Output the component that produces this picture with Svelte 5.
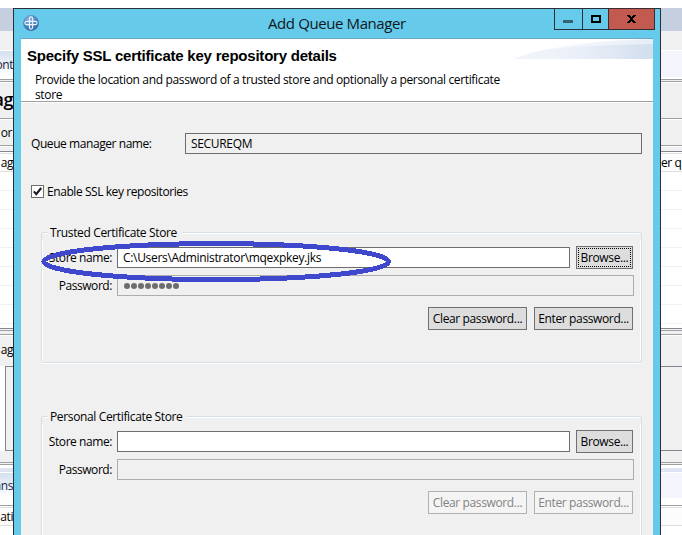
<script>
  // Horizontal strips of the application behind the dialog
  const bands = [
    { h: 8, c: '#ffffff' },
    { h: 23, c: '#c5cfdf' },
    { h: 19, c: '#f0f0f0' },
    { h: 1, c: '#ffffff' },
    { h: 26, c: '#f4f5fc', left: 'ont', kind: 'tab' },
    { h: 2, c: '#ffffff' },
    { h: 1, c: '#a0a0a0' },
    { h: 1, c: '#f0f0f0' },
    { h: 1, c: '#a0a0a0' },
    { h: 1, c: '#ffffff' },
    { h: 35, c: '#f0f0f0', left: 'ag', kind: 'title' },
    { h: 1, c: '#a0a0a0' },
    { h: 1, c: '#ffffff' },
    { h: 25, c: '#f0f0f0', left: 'or', kind: 'inset' },
    { h: 1, c: '#a0a0a0' },
    { h: 1, c: '#ffffff' },
    { h: 4, c: '#f0f0f0' },
    { h: 1, c: '#828790' },
    { h: 1, c: '#ffffff' },
    { h: 1, c: '#dedede' },
    { h: 17, c: '#fcfcfc', left: 'ag', right: 'er q' },
    { h: 1, c: '#dedede' },
    { h: 156, c: '#ffffff', kind: 'grid' },
    { h: 1, c: '#828790' },
    { h: 1, c: '#f0f0f0' },
    { h: 1, c: '#a0a0a0' },
    { h: 3, c: '#f0f0f0' },
    { h: 1, c: '#a0a0a0' },
    { h: 1, c: '#ffffff' },
    { h: 30, c: '#f0f0f0', left: 'ag', kind: 'raised' },
    { h: 85, c: '#f0f0f0', kind: 'box' },
    { h: 11, c: '#f0f0f0' },
    { h: 1, c: '#a0a0a0' },
    { h: 1, c: '#f0f0f0' },
    { h: 1, c: '#a0a0a0' },
    { h: 3, c: '#ffffff' },
    { h: 4, c: '#dfe4f5' },
    { h: 1, c: '#ffffff' },
    { h: 25, c: '#f4f5fc', left: 'ans', kind: 'tab' },
    { h: 7, c: '#ffffff' },
    { h: 1, c: '#a0a0a0' },
    { h: 1, c: '#ffffff' },
    { h: 1, c: '#dedede' },
    { h: 17, c: '#fcfcfc', left: 'ati' },
    { h: 1, c: '#dedede' },
    { h: 9, c: '#ffffff' }
  ];

  const groups = [
    { title: 'Trusted Certificate Store', store: 'C:\\Users\\Administrator\\mqexpkey.jks', password: 8, focused: true, disabled: false },
    { title: 'Personal Certificate Store', store: '', password: 0, focused: false, disabled: true }
  ];
</script>

<main>
  <div class="backdrop">
    {#each bands as b}
      <div class="band {b.kind ?? ''}" style="height:{b.h}px;background-color:{b.c}">
        <span class="edge">{b.left ?? ''}</span>
        {#if b.right}<span class="edge-right">{b.right}</span>{/if}
      </div>
    {/each}
  </div>

  <section class="dialog">
    <header class="titlebar">
      <svg class="logo" width="16" height="16" viewBox="0 0 16 16">
        <defs>
          <radialGradient id="ball" cx=".4" cy=".3" r=".75">
            <stop offset="0" stop-color="#8fb6dd" />
            <stop offset=".6" stop-color="#4b83bf" />
            <stop offset="1" stop-color="#2c619f" />
          </radialGradient>
        </defs>
        <circle cx="8" cy="8" r="7.9" fill="url(#ball)" />
        <g fill="none" stroke="#eaf3fb" stroke-width="1.1">
          <rect x="6.4" y="1.9" width="3.2" height="12.2" rx="1.6" />
          <rect x="1.9" y="6.4" width="12.2" height="3.2" rx="1.6" />
        </g>
      </svg>
      <h1>Add Queue Manager</h1>
      <div class="controls">
        <svg width="101" height="22" viewBox="0 0 101 22" shape-rendering="crispEdges">
          <rect x=".5" y=".5" width="28" height="21" fill="#66caea" stroke="#2b3038" />
          <rect x="28.5" y=".5" width="26" height="21" fill="#66caea" stroke="#2b3038" />
          <rect x="54.5" y=".5" width="46" height="21" fill="#c35a50" stroke="#3a2c30" />
          <rect x="9" y="12" width="10" height="3" fill="#33646f" />
          <rect x="38" y="8" width="8" height="6" fill="none" stroke="#000" stroke-width="2" />
          <path d="M73 7h3v1h1v1h1v-1h1v-1h3v1h-1v1h-1v1h-1v2h1v1h1v1h1v1h-3v-1h-1v-1h-1v1h-1v1h-3v-1h1v-1h1v-1h1v-2h-1v-1h-1v-1h-1z" fill="#000" />
        </svg>
      </div>
    </header>

    <div class="client">
      <div class="banner">
        <svg class="swoosh" width="140" height="20" viewBox="0 0 140 20">
          <defs>
            <linearGradient id="sweep">
              <stop offset="0" stop-color="#f2f4f8" />
              <stop offset=".3" stop-color="#eef2fa" />
              <stop offset=".65" stop-color="#e4eaf5" />
              <stop offset="1" stop-color="#d0deee" />
            </linearGradient>
          </defs>
          <path d="M0 20C30 8 80 2 140 0V20z" fill="url(#sweep)" />
          <path d="M30 11C70 3 110 1 140 0V5C100 6 60 7 30 11z" fill="#fff" opacity=".45" />
        </svg>
        <h2>Specify SSL certificate key repository details</h2>
        <p>Provide the location and password of a trusted store and optionally a personal certificate<br />store</p>
      </div>

      <div class="form">
        <div class="queue">
          <span class="queue-label">Queue manager name:</span>
          <div class="field readonly">SECUREQM</div>
        </div>

        <div class="enable">
          <svg width="13" height="13" viewBox="0 0 13 13">
            <rect x=".5" y=".5" width="12" height="12" fill="#fff" stroke="#6d6d6d" />
            <path d="M2.8 6.4L5.3 9.2L10.2 3" fill="none" stroke="#1c1c1c" stroke-width="2.1" />
          </svg>
          <span>Enable SSL key repositories</span>
        </div>

        {#each groups as g}
          <div class="group">
            <div class="legend"><span class="corner"></span><span class="legend-text">{g.title}</span><span class="rule"></span></div>
            <div class="group-body">
              <div class="line">
                <span class="label">Store name:</span>
                <div class="field store">{g.store}</div>
                <div class="button browse" class:focused={g.focused}><span>Browse...</span></div>
              </div>
              <div class="line second">
                <span class="label">Password:</span>
                <div class="field off">
                  {#each Array(g.password) as _}<i></i>{/each}
                </div>
              </div>
              <div class="actions">
                <div class="button" class:disabled={g.disabled}><span>Clear password...</span></div>
                <div class="button" class:disabled={g.disabled}><span>Enter password...</span></div>
              </div>
            </div>
          </div>
        {/each}
      </div>
    </div>
  </section>

  <svg class="marker" width="354" height="44" viewBox="0 0 354 44" shape-rendering="crispEdges">
    <ellipse cx="177.2" cy="21.6" rx="172.4" ry="18" fill="none" stroke="#3f48cc" stroke-width="5" />
  </svg>
</main>

<style>
  :global(body) { margin: 0; overflow: hidden; }
  main {
    position: relative; width: 682px; height: 535px; overflow: hidden; background: #fff;
    font: 12px/15px "Open Sans", "Noto Sans", sans-serif; color: #000; letter-spacing: -0.43px;
  }
  .backdrop { display: flex; flex-direction: column; }
  .band { display: flex; align-items: center; flex: none; box-sizing: border-box; overflow: hidden; white-space: nowrap; }
  .edge { display: flex; justify-content: flex-end; width: 13px; flex: none; }
  .edge-right { margin-left: 648px; }
  .inset .edge { width: 12px; }
  .tab { background-image: linear-gradient(#d5e1f0, #ffffff); background-size: 14px 100%; background-repeat: no-repeat; color: #1c2340; }
  .title { font-size: 18px; font-weight: 600; letter-spacing: -0.5px; }
  .title .edge { padding-bottom: 3px; }
  .raised { padding-bottom: 4px; }
  .grid { background-image: repeating-linear-gradient(#fff 0 18px, #f0f0f0 18px 19px); }
  .box { border: 1px solid #828790; border-right: 0; margin-left: 5px; }

  .dialog {
    position: absolute; left: 13px; top: 8px; width: 648px; height: 540px; box-sizing: border-box;
    border: 1px solid #2b3038; background: #66caea; display: flex; flex-direction: column;
  }
  .titlebar { display: flex; height: 30px; flex: none; position: relative; }
  .logo { margin: 6px 0 0 9px; }
  h1 { margin: 4px 0 0 229px; font-size: 15px; line-height: 20px; font-weight: 400; letter-spacing: -0.4px; white-space: nowrap; color: #10191d; }
  .controls { position: absolute; left: 540px; top: -1px; }
  .controls svg { display: block; }
  .client { width: 632px; margin-left: 7px; flex: 1; background: #f0f0f0; display: flex; flex-direction: column; box-shadow: 0 -1px #6fa6c8; }
  .banner { position: relative; height: 62px; background: #fff; border-bottom: 1px solid #a0a0a0; box-shadow: 0 1px #fff; flex: none; }
  .swoosh { position: absolute; right: 0; top: 0; }
  h2 { margin: 0; padding: 8px 0 0 6px; font: bold 15px/18px "Liberation Sans", Arial, sans-serif; letter-spacing: -0.22px; white-space: nowrap; }
  p { margin: 7px 0 0 14px; white-space: nowrap; letter-spacing: -0.35px; }
  .form { padding: 31px 11px 0 10px; }
  .queue { display: flex; align-items: center; height: 21px; }
  .queue-label { width: 154px; }
  .field { box-sizing: border-box; height: 21px; border: 1px solid #6d6d6d; padding-left: 5px; line-height: 19px; background: #fff; white-space: nowrap; letter-spacing: -0.32px; flex: none; }
  .field.readonly { flex: 1; background: #f0f0f0; }
  .enable { display: flex; align-items: center; gap: 3px; height: 15px; margin-top: 30px; }
  .group { margin: 26px 0 0 10px; height: 138px; display: flex; flex-direction: column; }
  .group + .group { margin-top: 46px; }
  .legend { display: flex; height: 15px; align-items: flex-start; flex: none; white-space: nowrap; letter-spacing: -0.36px; }
  .corner, .rule { box-sizing: border-box; height: 8px; margin-top: 7px; border-top: 1px solid #d5dfe5; box-shadow: inset 0 1px #fff; }
  .corner { width: 7px; border-left: 1px solid #d5dfe5; border-top-left-radius: 3px; }
  .rule { flex: 1; border-right: 1px solid #d5dfe5; border-top-right-radius: 3px; margin-left: 5px; }
  .legend-text { margin-left: 2px; }
  .group-body { flex: 1; border: 1px solid #d5dfe5; border-top: 0; border-radius: 0 0 3px 3px; box-shadow: 0 1px #fff, inset 1px 0 #fff, inset -1px 0 #fff; padding: 6px 7px 0 7px; }
  .line { display: flex; align-items: center; height: 23px; }
  .second { margin-top: 5px; }
  .label { width: 63px; margin-right: 5px; display: flex; justify-content: flex-end; white-space: nowrap; flex: none; }
  .store { width: 453px; }
  .off { width: 517px; border-color: #adadad; background: #f0f0f0; display: flex; align-items: center; gap: 1px; padding-left: 6px; }
  .off i { width: 6px; height: 6px; border-radius: 50%; background: #6d6d6d; }
  .button { box-sizing: border-box; width: 99px; height: 23px; border: 1px solid #707070; background: #ddd; display: flex; align-items: center; justify-content: center; white-space: nowrap; letter-spacing: -0.37px; }
  .browse { width: 57px; margin-left: 6px; flex: none; }
  .focused { outline: 1px dotted #000; outline-offset: -3px; }
  .disabled { background: #f4f4f4; border-color: #adb2b5; color: #838383; }
  .actions { display: flex; justify-content: flex-end; gap: 7px; margin: 10px 1px 0 0; }
  .marker { position: absolute; left: 39px; top: 240px; }
</style>
